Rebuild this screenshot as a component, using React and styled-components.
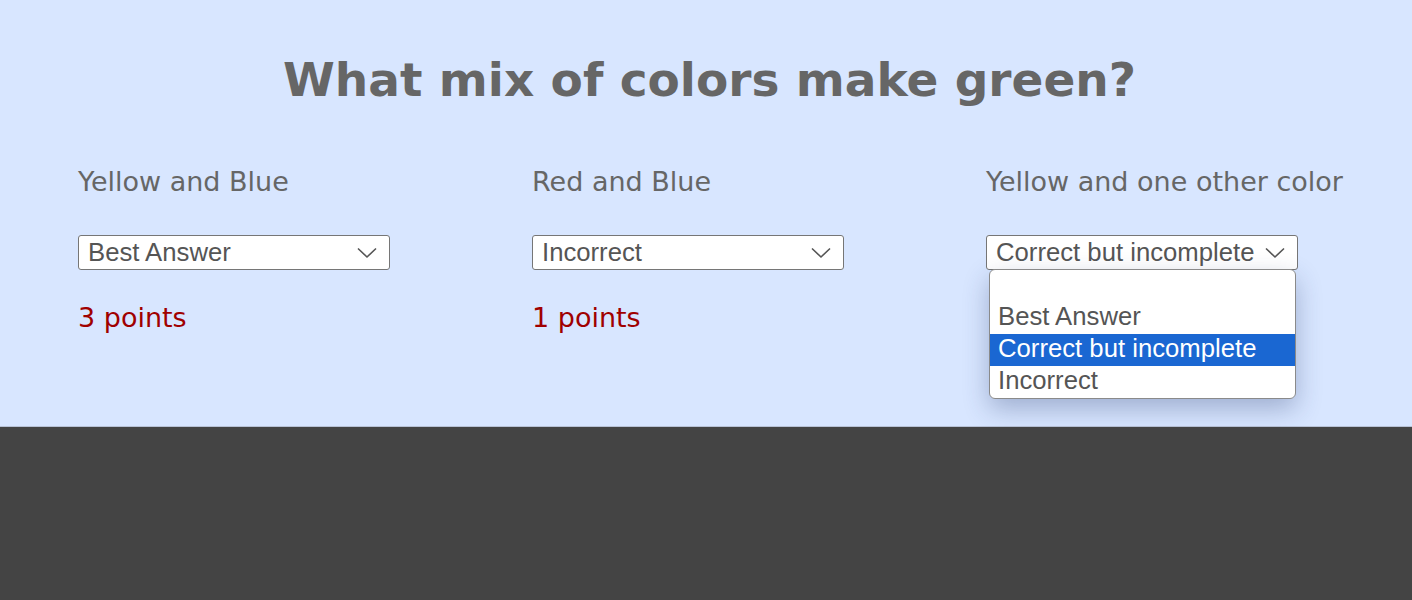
import styled, { createGlobalStyle } from 'styled-components'

const GlobalStyle = createGlobalStyle`
  html, body {
    margin: 0;
    padding: 0;
    background: #444444;
  }
`

const Panel = styled.div`
  background: #d8e6ff;
  height: 427px;
  border-bottom: 1px solid #b8c2d6;
  padding-top: 50px;
  box-sizing: border-box;
`

const Title = styled.h1`
  margin: 0;
  padding-left: 7px;
  text-align: center;
  font-family: "DejaVu Sans", Verdana, sans-serif;
  font-weight: bold;
  font-size: 47px;
  line-height: 60px;
  color: #666666;
`

const Columns = styled.div`
  display: grid;
  grid-template-columns: repeat(3, 454px);
  padding-left: 78px;
  margin-top: 55px;
`

const Column = styled.div`
  display: flex;
  flex-direction: column;
  align-items: flex-start;
`

const Label = styled.div`
  font-family: "DejaVu Sans", Verdana, sans-serif;
  font-size: 27px;
  line-height: 34px;
  color: #666666;
`

const SelectWrap = styled.div`
  position: relative;
  margin-top: 36px;
`

const SelectBox = styled.div`
  display: flex;
  align-items: center;
  justify-content: space-between;
  box-sizing: border-box;
  width: ${p => p.$width}px;
  height: 35px;
  padding: 0 12px 0 9px;
  background: #ffffff;
  border: 1px solid #767676;
  border-radius: 3px;
  font-family: "Liberation Sans", Arial, sans-serif;
  font-size: 25.7px;
  color: #555555;
  white-space: nowrap;
`

const Chevron = () => (
  <svg width="20" height="12" viewBox="0 0 20 12">
    <path d="M1 1.5 L10 10 L19 1.5" fill="none" stroke="#555" strokeWidth="1.6" />
  </svg>
)

const Points = styled.div`
  margin-top: 31px;
  font-family: "DejaVu Sans", Verdana, sans-serif;
  font-size: 27px;
  line-height: 34px;
  color: #a00000;
`

const Menu = styled.ul`
  position: absolute;
  top: 34px;
  left: 3px;
  width: 307px;
  margin: 0;
  padding: 0;
  list-style: none;
  box-sizing: border-box;
  background: #ffffff;
  border: 1px solid #8a8a8a;
  border-radius: 6px;
  box-shadow: 0 10px 26px rgba(40, 60, 110, 0.32);
  font-family: "Liberation Sans", Arial, sans-serif;
  font-size: 25.7px;
  overflow: hidden;
`

const Option = styled.li`
  height: 32px;
  line-height: 29px;
  padding: 0 0 3px 8px;
  box-sizing: border-box;
  white-space: nowrap;
  color: ${p => (p.$selected ? '#ffffff' : '#555555')};
  background: ${p => (p.$selected ? '#1a67d2' : 'transparent')};
`

const questions = [
  { label: 'Yellow and Blue', value: 'Best Answer', points: '3 points', width: 312 },
  { label: 'Red and Blue', value: 'Incorrect', points: '1 points', width: 312 },
  { label: 'Yellow and one other color', value: 'Correct but incomplete', open: true, width: 312 },
]

const options = ['\u00a0', 'Best Answer', 'Correct but incomplete', 'Incorrect']

export default function App() {
  return (
    <>
      <GlobalStyle />
      <Panel>
        <Title>What mix of colors make green?</Title>
        <Columns>
          {questions.map(q => (
            <Column key={q.label}>
              <Label>{q.label}</Label>
              <SelectWrap>
                <SelectBox $width={q.width}>
                  <span>{q.value}</span>
                  <Chevron />
                </SelectBox>
                {q.open && (
                  <Menu>
                    {options.map(o => (
                      <Option key={o} $selected={o === q.value}>{o}</Option>
                    ))}
                  </Menu>
                )}
              </SelectWrap>
              {q.points && <Points>{q.points}</Points>}
            </Column>
          ))}
        </Columns>
      </Panel>
    </>
  )
}
